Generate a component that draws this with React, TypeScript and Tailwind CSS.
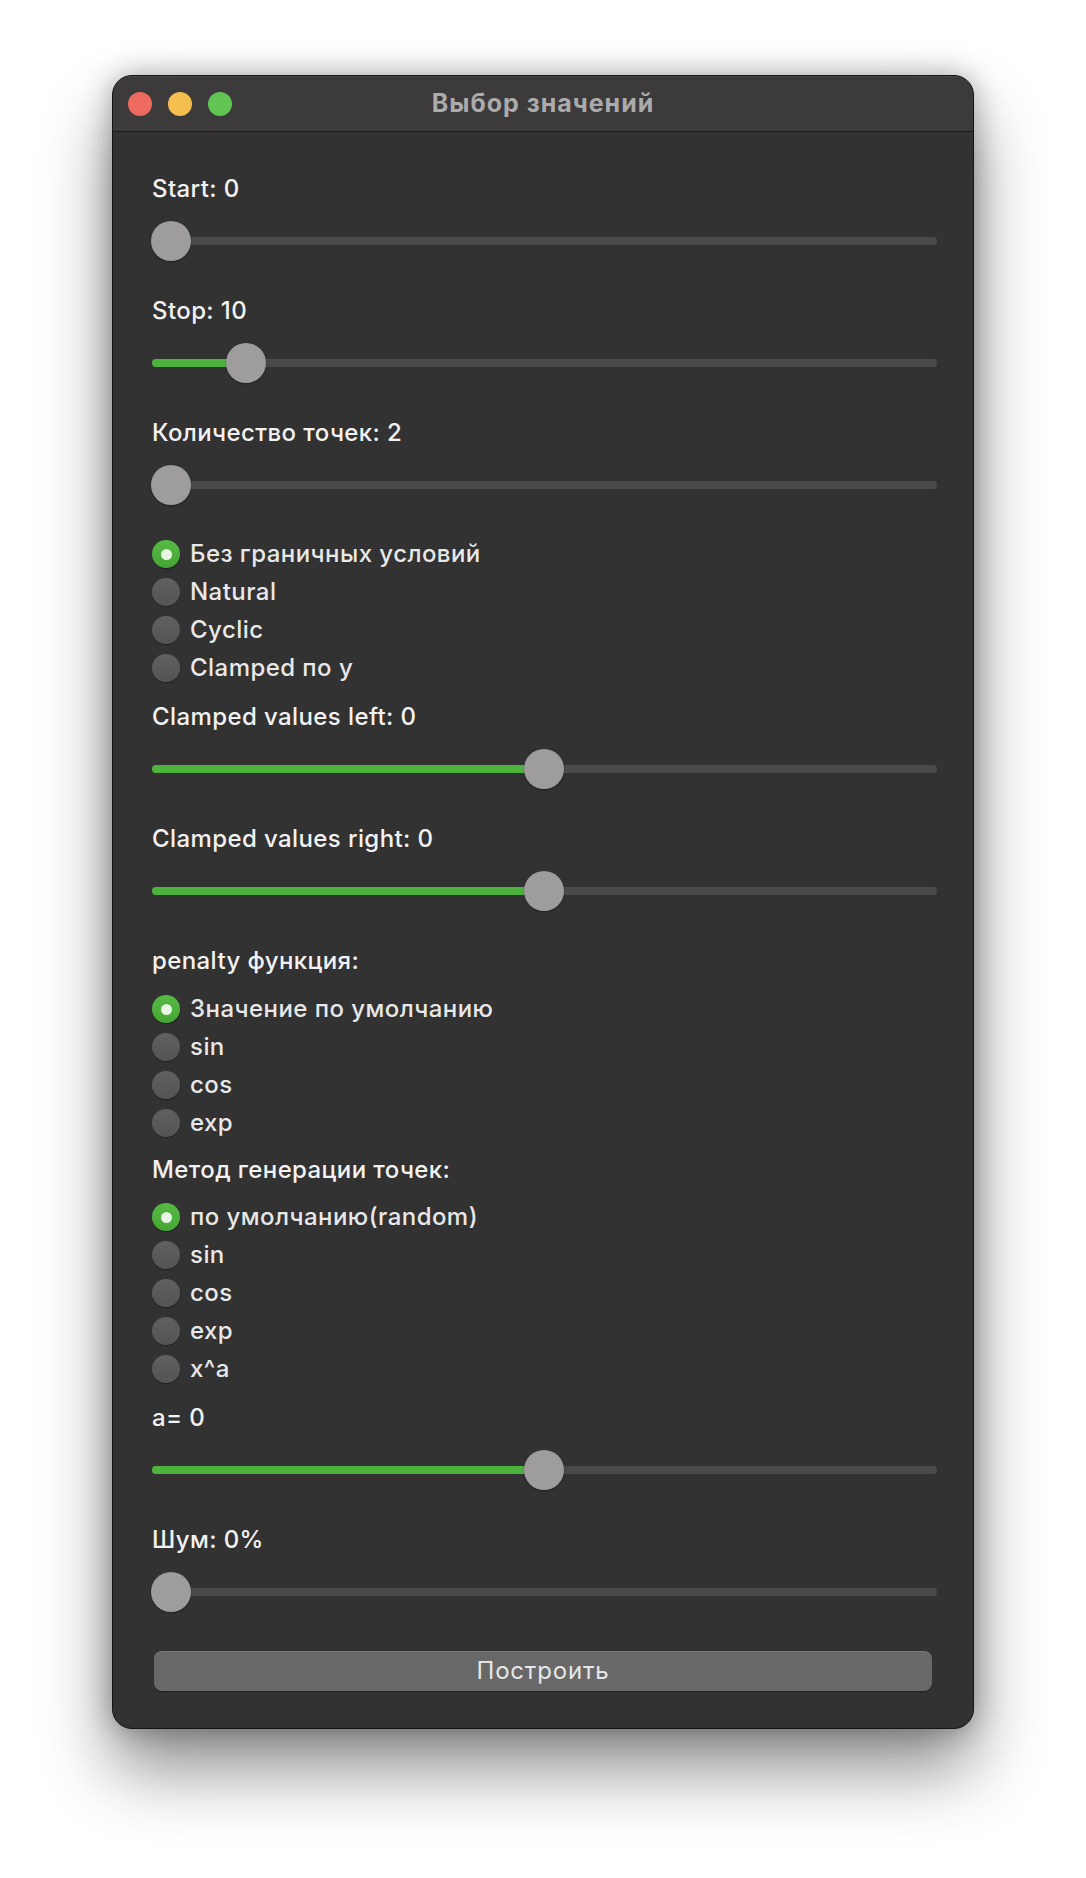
import React from 'react';

const font = { fontFamily: 'Inter, "Noto Sans", sans-serif' };

function Slider({ value }: { value: number }) {
  // track is 786px wide, thumb is 40px
  const pos = value * 746;
  return (
    <div className="relative flex h-[40px] items-center">
      <div className="h-[8px] w-full rounded-full bg-[#4a4a4a]">
        {value > 0 && (
          <div className="h-full rounded-full bg-[#4db33d]" style={{ width: pos + 20 }} />
        )}
      </div>
      <div
        className="absolute top-0 h-[40px] w-[40px] rounded-full bg-[#9e9c9d] shadow-[0_1px_2px_rgba(0,0,0,0.35)]"
        style={{ left: pos - 1 }}
      />
    </div>
  );
}

function Label({ children, className = '' }: { children: React.ReactNode; className?: string }) {
  return (
    <div className={`h-[30px] text-[24px] font-medium leading-[30px] tracking-[0.4px] text-[#f2f2f2] ${className}`}>
      {children}
    </div>
  );
}

function Radio({ label, checked = false }: { label: string; checked?: boolean }) {
  return (
    <div className="flex h-[38px] items-center gap-[10px]">
      {checked ? (
        <span className="flex h-[28px] w-[28px] items-center justify-center rounded-full bg-gradient-to-b from-[#55bb44] to-[#45a534] shadow-[0_1px_1px_rgba(0,0,0,0.4)]">
          <span className="h-[11px] w-[11px] rounded-full bg-[#e9f5e3]" />
        </span>
      ) : (
        <span className="h-[28px] w-[28px] rounded-full bg-gradient-to-b from-[#606060] to-[#545454] shadow-[0_1px_1px_rgba(0,0,0,0.4)]" />
      )}
      <span className="text-[24px] font-medium leading-[30px] tracking-[0.45px] text-[#e8e8e8]">{label}</span>
    </div>
  );
}

export default function App() {
  return (
    <div className="min-h-[1878px] bg-white pl-[112px] pt-[75px]" style={font}>
      <div className="w-[862px] overflow-hidden rounded-[20px] border border-[#141414] bg-[#323232] shadow-[0_0_28px_rgba(0,0,0,0.3),0_40px_70px_rgba(0,0,0,0.45)]">
        <div className="grid h-[56px] grid-cols-[1fr_auto_1fr] items-center border-b border-[#1a1a1a] bg-[#3c3a3b] shadow-[inset_0_1px_0_rgba(255,255,255,0.08)]">
          <div className="flex gap-[16px] pl-[15px]">
            <span className="h-[24px] w-[24px] rounded-full bg-[#ec6a5e]" />
            <span className="h-[24px] w-[24px] rounded-full bg-[#f4bf4f]" />
            <span className="h-[24px] w-[24px] rounded-full bg-[#61c554]" />
          </div>
          <div className="text-[25px] font-bold tracking-[1px] text-[#ababab]">Выбор значений</div>
          <div />
        </div>

        <div className="pb-[37px] pl-[39px] pr-[36px] pt-[42px]">
          <Label>Start: 0</Label>
          <div className="mt-[17px]"><Slider value={0} /></div>

          <Label className="mt-[35px]">Stop: 10</Label>
          <div className="mt-[17px]"><Slider value={0.1} /></div>

          <Label className="mt-[35px]">Количество точек: 2</Label>
          <div className="mt-[17px]"><Slider value={0} /></div>

          <div className="mt-[30px]">
            <Radio label="Без граничных условий" checked />
            <Radio label="Natural" />
            <Radio label="Cyclic" />
            <Radio label="Clamped по y" />
          </div>

          <Label className="mt-[15px]">Clamped values left: 0</Label>
          <div className="mt-[17px]"><Slider value={0.5} /></div>

          <Label className="mt-[35px]">Clamped values right: 0</Label>
          <div className="mt-[17px]"><Slider value={0.5} /></div>

          <Label className="mt-[35px]">penalty функция:</Label>
          <div className="mt-[14px]">
            <Radio label="Значение по умолчанию" checked />
            <Radio label="sin" />
            <Radio label="cos" />
            <Radio label="exp" />
          </div>

          <Label className="mt-[13px]">Метод генерации точек:</Label>
          <div className="mt-[13px]">
            <Radio label="по умолчанию(random)" checked />
            <Radio label="sin" />
            <Radio label="cos" />
            <Radio label="exp" />
            <Radio label="x^a" />
          </div>

          <Label className="mt-[15px]">a= 0</Label>
          <div className="mt-[17px]"><Slider value={0.5} /></div>

          <Label className="mt-[35px]">Шум: 0%</Label>
          <div className="mt-[17px]"><Slider value={0} /></div>

          <button className="ml-[2px] mt-[39px] flex h-[40px] w-[778px] items-center justify-center rounded-[8px] bg-[#686868] text-[24px] tracking-[0.8px] text-[#e6e6e6] shadow-[inset_0_1px_0_rgba(255,255,255,0.12),0_1px_1px_rgba(0,0,0,0.4)]">
            Построить
          </button>
        </div>
      </div>
    </div>
  );
}
